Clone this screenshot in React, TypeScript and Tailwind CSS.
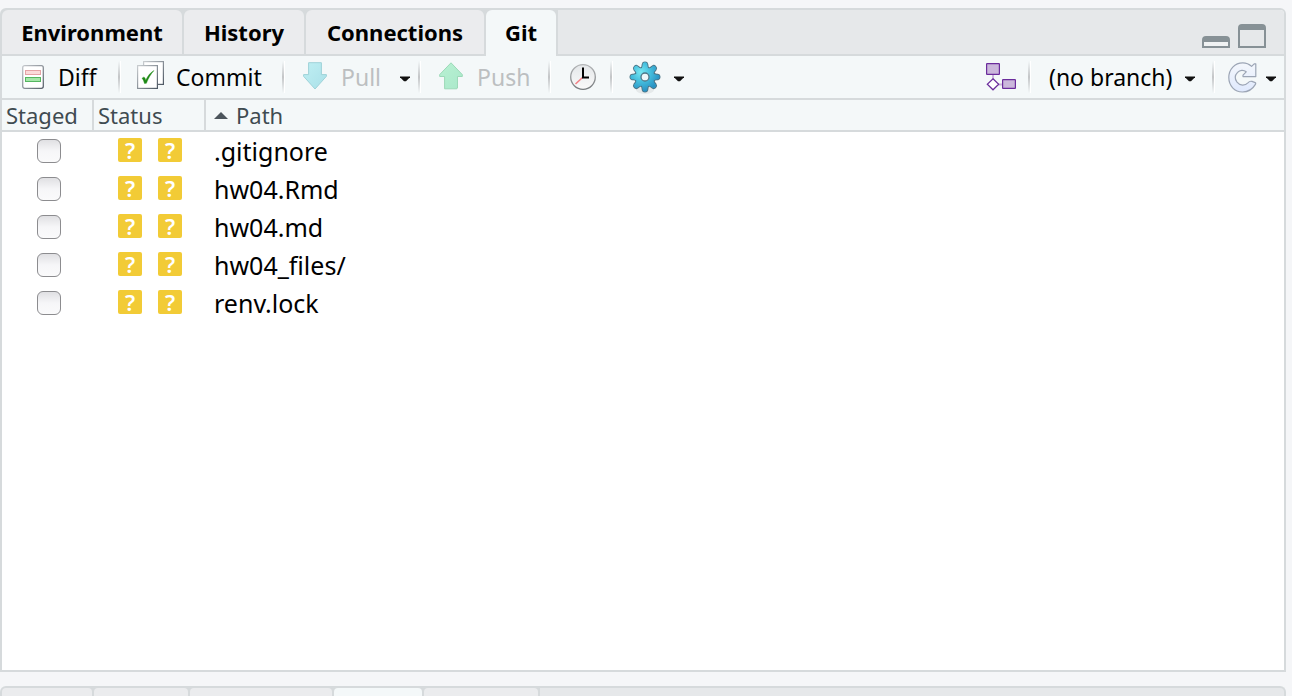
import React, { useState } from "react";

const TABS = [
  { name: "Environment", width: "w-[182px]" },
  { name: "History", width: "w-[122px]" },
  { name: "Connections", width: "w-[180px]" },
  { name: "Git", width: "w-[72px]" },
];

const LOWER_TABS = [
  { name: "Files", width: "w-[92px]", active: false },
  { name: "Plots", width: "w-[96px]", active: false },
  { name: "Packages", width: "w-[144px]", active: false },
  { name: "Help", width: "w-[90px]", active: true },
  { name: "Viewer", width: "w-[116px]", active: false },
];

const FILES = [".gitignore", "hw04.Rmd", "hw04.md", "hw04_files/", "renv.lock"];

function Caret() {
  return (
    <svg width="12" height="6" viewBox="0 0 12 6" className="mt-1 shrink-0" aria-hidden="true">
      <path d="M1 0.5H11L11 1.3L7 5.2H5L1 1.3Z" fill="#111" />
    </svg>
  );
}

function Separator() {
  return <div className="h-8 w-[3px] shrink-0 border-r border-white bg-linear-to-b from-[#f4f8f9] via-[#c3c5c7] to-[#f4f8f9]" />;
}

function DiffIcon() {
  return (
    <svg width="22" height="24" viewBox="0 0 22 24" aria-hidden="true">
      <defs>
        <linearGradient id="edge" x1="0" y1="0" x2="1" y2="1">
          <stop offset="0" stopColor="#c3c7cb" />
          <stop offset="1" stopColor="#59616b" />
        </linearGradient>
      </defs>
      <rect x="0.7" y="0.7" width="20.6" height="22.6" rx="2" fill="#fff" stroke="url(#edge)" strokeWidth="1.3" />
      <rect x="3.5" y="5.5" width="15" height="4" fill="#fbdada" stroke="#e5a2a5" />
      <rect x="3.5" y="12.5" width="15" height="4" fill="#a5e6a9" stroke="#55b660" />
    </svg>
  );
}

function CommitIcon() {
  return (
    <svg width="27" height="28" viewBox="0 0 27 28" className="mb-1" aria-hidden="true">
      <defs>
        <linearGradient id="page" x1="0" y1="0" x2="1" y2="1">
          <stop offset="0" stopColor="#c9cdd0" />
          <stop offset="1" stopColor="#4e5864" />
        </linearGradient>
      </defs>
      <rect x="6.6" y="0.6" width="19.8" height="22.8" fill="#fff" stroke="url(#page)" strokeWidth="1.2" />
      <rect x="0.6" y="4.6" width="19.8" height="22.8" fill="#fff" stroke="url(#page)" strokeWidth="1.2" />
      <path d="M5 17.4C6 16 7.3 15.6 8 17L8.7 19.3C11 14.5 13.5 11.5 17 9.5C13.5 13.3 11.3 17.5 9.4 22.3L7.5 22.5C6.8 20.3 6.3 18 5 17.4Z" fill="#1f8a16" stroke="#1f8a16" strokeWidth="0.4" />
    </svg>
  );
}

function ArrowIcon({ up }: { up?: boolean }) {
  return (
    <svg width="24" height="28" viewBox="0 0 24 28" className="mb-0.5" aria-hidden="true">
      <defs>
        <linearGradient id="down" x1="0" y1="0" x2="1" y2="1">
          <stop offset="0" stopColor="#bfeff3" />
          <stop offset="1" stopColor="#aae0e8" />
        </linearGradient>
        <linearGradient id="up" x1="0" y1="0" x2="1" y2="1">
          <stop offset="0" stopColor="#b9f1d3" />
          <stop offset="1" stopColor="#a9e8ca" />
        </linearGradient>
      </defs>
      {up ? (
        <path d="M12 0.8L23.3 12.6V14.5H18.5V26H17.8V26.8H5.6V14.5H0.7V12.6Z" fill="url(#up)" stroke="#9cd9b8" />
      ) : (
        <path d="M5.6 0.7H18.4V12.6H23.4V14.3L12 27L0.6 14.3V12.6H5.6Z" fill="url(#down)" stroke="#9ed2d8" />
      )}
    </svg>
  );
}

function ClockIcon() {
  return (
    <svg width="26" height="26" viewBox="0 0 26 26" aria-hidden="true">
      <defs>
        <linearGradient id="rim" x1="0" y1="0" x2="0" y2="1">
          <stop offset="0" stopColor="#b3b5b7" />
          <stop offset="1" stopColor="#777b7e" />
        </linearGradient>
        <linearGradient id="face" x1="0" y1="0" x2="0" y2="1">
          <stop offset="0" stopColor="#e4e7e9" />
          <stop offset="1" stopColor="#fafafa" />
        </linearGradient>
      </defs>
      <circle cx="13" cy="13" r="12.3" fill="url(#face)" stroke="url(#rim)" strokeWidth="1.3" />
      <path d="M12.5 13.5L5.5 20" stroke="#f28085" strokeWidth="1.6" />
      <path d="M13 3.5V13.5H19" fill="none" stroke="#000" strokeWidth="2" />
    </svg>
  );
}

function GearIcon() {
  const teeth = [0, 45, 90, 135, 180, 225, 270, 315];
  const tooth = "M-3.6 -8.6C-2.4 -9.8 -2.6 -11.6 -2.3 -13C-1.9 -15.2 1.9 -15.2 2.3 -13C2.6 -11.6 2.4 -9.8 3.6 -8.6L2 0H-2Z";
  return (
    <svg width="32" height="32" viewBox="-16 -16 32 32" overflow="visible" aria-hidden="true">
      <defs>
        <radialGradient id="gear" gradientUnits="userSpaceOnUse" cx="-4" cy="-5" r="19">
          <stop offset="0" stopColor="#78e8f2" />
          <stop offset="0.5" stopColor="#45bedd" />
          <stop offset="1" stopColor="#2a93c4" />
        </radialGradient>
        <mask id="gearShape">
          {teeth.map((a) => <path key={a} d={tooth} transform={`rotate(${a})`} fill="#fff" />)}
          <circle r="9.2" fill="#fff" />
        </mask>
      </defs>
      <ellipse cx="0" cy="13" rx="9" ry="4" fill="#000" opacity="0.06" />
      <g stroke="#4c7485" strokeWidth="1.8" fill="#4c7485">
        {teeth.map((a) => <path key={a} d={tooth} transform={`rotate(${a})`} />)}
        <circle r="9.2" />
      </g>
      <rect x="-16" y="-16" width="32" height="32" fill="url(#gear)" mask="url(#gearShape)" />
      <circle r="4" fill="#eef7f9" stroke="#4e7888" strokeWidth="1.3" />
    </svg>
  );
}

function BranchIcon() {
  return (
    <svg width="30" height="28" viewBox="0 0 30 28" aria-hidden="true">
      <path d="M7 12V16M12 21.5H17" stroke="#cbb5dc" strokeWidth="2" />
      <rect x="0.6" y="0.6" width="12.8" height="10.8" rx="0.5" fill="#cbb7dc" stroke="#6b2c9c" strokeWidth="1.2" />
      <rect x="16.6" y="16.6" width="12.8" height="8.8" rx="0.5" fill="#cbb7dc" stroke="#6b2c9c" strokeWidth="1.2" />
      <path d="M7 15.8L12.7 21.2L7 26.8L1.3 21.2Z" fill="#fff" stroke="#6b2c9c" strokeWidth="1.2" />
    </svg>
  );
}

function RefreshIcon() {
  return (
    <svg width="29" height="31" viewBox="0 0 29 31" aria-hidden="true">
      <defs>
        <linearGradient id="turn" x1="0" y1="0" x2="0" y2="1">
          <stop offset="0" stopColor="#f4f7fc" />
          <stop offset="1" stopColor="#dfe9fd" />
        </linearGradient>
      </defs>
      <path
        d="M27.8 1.8V14.6H15V13.2L18.2 9.8C15.5 7.6 11.8 8 9.6 10.4C6.8 13.3 6.8 17.2 9 20.2C12 24 17 24 20.2 20.6C21.2 19.4 22.6 19 24 19.4L27.2 20.6C27.9 20.9 27.8 21.7 27.4 22.4C24.5 27.4 20 30 14.5 30C6.5 30 0.8 23.6 0.8 15.6C0.8 7.2 6.8 0.9 14.8 0.9C18 0.9 21 2 23.6 4.4L26.2 1.8Z"
        fill="url(#turn)" stroke="#9ca5b5" strokeWidth="1.2" strokeLinejoin="round"
      />
    </svg>
  );
}

function MinimizeIcon() {
  return (
    <svg width="28" height="12" viewBox="0 0 28 12" aria-hidden="true">
      <path d="M1 11V4Q1 1 4 1H24Q27 1 27 4V11Z" fill="#f0f2f3" stroke="#879196" strokeWidth="2" />
      <path d="M1 6V4Q1 1 4 1H24Q27 1 27 4V6Z" fill="#879196" />
    </svg>
  );
}

function MaximizeIcon() {
  return (
    <svg width="28" height="24" viewBox="0 0 28 24" aria-hidden="true">
      <path d="M1 23V4Q1 1 4 1H24Q27 1 27 4V23Z" fill="#e6e8ea" stroke="#879196" strokeWidth="2" />
      <path d="M1 6V4Q1 1 4 1H24Q27 1 27 4V6Z" fill="#879196" />
    </svg>
  );
}

function StatusBadge() {
  return (
    <span className="flex size-6 items-center justify-center rounded-xs bg-[#f2cb36] text-[22px] leading-6 font-semibold text-white">?</span>
  );
}

function FileRow({ name }: { name: string }) {
  const [staged, setStaged] = useState(false);
  return (
    <tr className="h-[38px]">
      <td className="p-0">
        <input
          type="checkbox"
          aria-label={`Stage ${name}`}
          checked={staged}
          onChange={() => setStaged(!staged)}
          className="ml-[35px] block size-6 appearance-none rounded-md border border-[#8c8c8f] bg-linear-to-b from-[#e0e0e3] via-[#f6f6f8] to-[#fafafb] checked:bg-[#4f8fe0]"
        />
      </td>
      <td className="p-0">
        <div className="flex gap-4 pb-0.5 pl-6">
          <StatusBadge />
          <StatusBadge />
        </div>
      </td>
      <td className="p-0 pl-2 text-[25px] leading-8">{name}</td>
    </tr>
  );
}

export default function App() {
  const [active, setActive] = useState("Git");
  return (
    <div className="flex h-screen flex-col gap-3.5 overflow-hidden bg-[#f5f6f8] pt-2 pr-1.5 font-['Noto_Sans','Open_Sans',sans-serif] text-black">
      <section className="flex min-h-0 flex-1 flex-col rounded-t-md border-2 border-[#d6dadc] bg-white">
        <header className="flex h-11 shrink-0 items-stretch rounded-t-sm bg-[#e6e8ea]">
          <div role="tablist" className="flex">
            {TABS.map((tab) => (
              <button
                key={tab.name}
                type="button"
                role="tab"
                aria-selected={active === tab.name}
                onClick={() => setActive(tab.name)}
                className={`${tab.width} flex border-r-2 border-[#d6dadc] bg-[#d6dadc] text-[22px] font-bold ${active === tab.name ? "relative -mb-0.5" : ""}`}
              >
                <span className={`flex flex-1 items-center justify-center self-stretch rounded-t-md ${active === tab.name ? "bg-[#f4f8f9] pb-0.5" : "bg-[#ebecee]"}`}>
                  {tab.name}
                </span>
              </button>
            ))}
          </div>
          <div className="ml-auto flex items-end gap-2 pr-[18px] pb-1.5">
            <button type="button" aria-label="Minimize"><MinimizeIcon /></button>
            <button type="button" aria-label="Maximize"><MaximizeIcon /></button>
          </div>
        </header>

        <div role="toolbar" className="flex h-[46px] shrink-0 items-center border-y-2 border-[#d6dadc] bg-[#f4f8f9] text-[23px]">
          <button type="button" className="flex w-[116px] items-center gap-3.5 pl-5"><DiffIcon />Diff</button>
          <Separator />
          <button type="button" className="flex w-[161px] items-center gap-3 pl-4"><CommitIcon />Commit</button>
          <Separator />
          <div className="flex w-[133px] items-center pl-[18px]">
            <button type="button" disabled className="flex w-24 items-center gap-3.5 text-[#bcbfc1]"><ArrowIcon />Pull</button>
            <button type="button" aria-label="Pull options"><Caret /></button>
          </div>
          <Separator />
          <button type="button" disabled className="flex w-[127px] items-center gap-3.5 pl-[18px] text-[#bcbfc1]"><ArrowIcon up />Push</button>
          <Separator />
          <button type="button" aria-label="History" className="flex w-[59px] pl-[19px]"><ClockIcon /></button>
          <Separator />
          <button type="button" aria-label="More" className="flex items-center gap-3 pl-4"><GearIcon /><Caret /></button>

          <div className="ml-auto flex items-center">
            <button type="button" aria-label="New branch" className="mr-3"><BranchIcon /></button>
            <Separator />
            <label className="relative flex items-center pl-[18px]">
              <select aria-label="Branch" className="w-[163px] appearance-none bg-transparent">
                <option>(no branch)</option>
              </select>
              <span className="pointer-events-none absolute right-4"><Caret /></span>
            </label>
            <Separator />
            <button type="button" aria-label="Refresh" className="flex items-center gap-2 pr-[7px] pl-[13px]"><RefreshIcon /><Caret /></button>
          </div>
        </div>

        <table className="w-full table-fixed border-separate border-spacing-0 text-left">
          <thead>
            <tr className="h-8 bg-[#f4f8f9] text-[22px] leading-[30px] text-[#3f4b51]">
              <th className="w-[92px] border-r-2 border-b-2 border-[#d6dadc] p-0 pl-1 font-normal">Staged</th>
              <th className="w-28 border-r-2 border-b-2 border-[#d6dadc] p-0 pl-1 font-normal">Status</th>
              <th className="border-b-2 border-[#d6dadc] p-0 pl-2 font-normal">
                <span className="flex items-center gap-2">
                  <svg width="14" height="7" viewBox="0 0 14 7" aria-hidden="true"><path d="M7 0L14 7H0Z" fill="#4c555c" /></svg>
                  Path
                </span>
              </th>
            </tr>
          </thead>
          <tbody>
            {FILES.map((name) => <FileRow key={name} name={name} />)}
          </tbody>
        </table>
      </section>

      <section className="flex h-2.5 shrink-0 rounded-t-md border-x-2 border-t-2 border-[#d6dadc] bg-[#e6e8ea]">
        {LOWER_TABS.map((tab) => (
          <button key={tab.name} type="button" aria-label={tab.name} className={`${tab.width} flex border-r-2 border-[#d6dadc] bg-[#d6dadc]`}>
            <span className={`flex-1 self-stretch rounded-t-sm ${tab.active ? "bg-[#f4f8f9]" : "bg-[#ebecee]"}`} />
          </button>
        ))}
      </section>
    </div>
  );
}
